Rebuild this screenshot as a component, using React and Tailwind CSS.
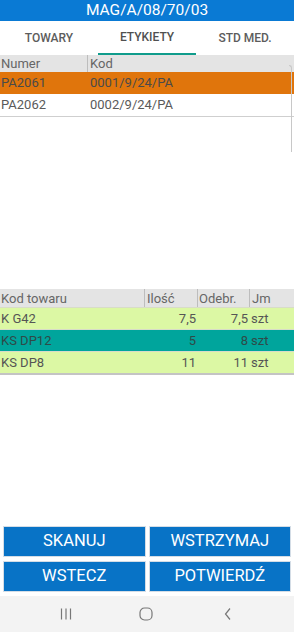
import React from "react";

const rows2 = [
  { kod: "K G42", ilosc: "7,5", odebr: "7,5", jm: "szt", bg: "bg-[#dcf8a4]", tc: "text-[#555]" },
  { kod: "KS DP12", ilosc: "5", odebr: "8", jm: "szt", bg: "bg-[#00a59c]", tc: "text-[#2f4a48]" },
  { kod: "KS DP8", ilosc: "11", odebr: "11", jm: "szt", bg: "bg-[#dcf8a4]", tc: "text-[#555]" },
];

export default function App() {
  return (
    <div
      className="w-[294px] h-[632px] flex flex-col bg-white overflow-hidden"
      style={{ fontFamily: "Roboto, 'Noto Sans', sans-serif" }}
    >
      {/* Title */}
      <div className="h-[21px] bg-[#0a7ad4] text-white flex items-center justify-center text-[15.5px] leading-none">
        MAG/A/08/70/03
      </div>

      {/* Tabs */}
      <div className="h-[34px] flex">
        <div className="w-[98px] flex items-center justify-center text-[12px] font-medium text-[#5c5c5c]">TOWARY</div>
        <div className="w-[98px] flex flex-col">
          <div className="flex-1 flex items-center justify-center text-[12px] font-medium text-[#505050]">ETYKIETY</div>
          <div className="h-[2px] bg-[#109c8c]" />
        </div>
        <div className="w-[98px] flex items-center justify-center text-[12px] font-medium text-[#5c5c5c]">STD MED.</div>
      </div>

      {/* Top list */}
      <div className="h-[234px] relative">
        <div className="h-[17px] bg-[#e4e4e4] flex text-[13px] text-[#666] leading-none">
          <div className="w-[88px] border-r border-[#bdbdbd] flex items-center pl-[1px]">Numer</div>
          <div className="flex-1 flex items-center pl-[2px]">Kod</div>
        </div>
        <div className="h-[22px] bg-[#e0750c] flex items-center text-[13px] text-[#4a4a4a]">
          <div className="w-[88px] pl-[1px]">PA2061</div>
          <div className="flex-1 pl-[2px]">0001/9/24/PA</div>
        </div>
        <div className="h-[23px] bg-white flex items-center text-[13px] text-[#5a5a5a] border-b border-[#cfcfcf]">
          <div className="w-[88px] pl-[1px]">PA2062</div>
          <div className="flex-1 pl-[2px]">0002/9/24/PA</div>
        </div>
        <div className="absolute right-[2px] top-[10px] h-[87px] w-[3px] border-r border-t border-[#c8c8c8] rounded-tr-[3px]" />
      </div>

      {/* Bottom table */}
      <div className="flex flex-col text-[13px] leading-none">
        <div className="h-[18px] bg-[#e4e4e4] flex text-[#666]">
          <div className="w-[145px] border-r border-[#bdbdbd] flex items-center pl-[1px]">Kod towaru</div>
          <div className="w-[53px] border-r border-[#bdbdbd] flex items-center pl-[2px]">Ilość</div>
          <div className="w-[52px] border-r border-[#bdbdbd] flex items-center pl-[1px]">Odebr.</div>
          <div className="flex-1 flex items-center pl-[2px]">Jm</div>
        </div>
        {rows2.map((r, i) => (
          <div key={i} className={`h-[22px] flex items-center border-t border-[#d8dcc8] ${r.bg} ${r.tc}`}>
            <div className="w-[145px] pl-[1px]">{r.kod}</div>
            <div className="w-[53px] text-right pr-[2px]">{r.ilosc}</div>
            <div className="w-[52px] text-right pr-[2px]">{r.odebr}</div>
            <div className="flex-1 pl-[1px]">{r.jm}</div>
          </div>
        ))}
        <div className="h-[2px] bg-[#c4c4c4]" />
      </div>

      <div className="flex-1" />

      {/* Buttons */}
      <div className="grid grid-cols-2 gap-x-[3px] gap-y-[4px] px-[3px] pb-[4px]">
        {["SKANUJ", "WSTRZYMAJ", "WSTECZ", "POTWIERDŹ"].map((t) => (
          <div
            key={t}
            className="h-[31px] bg-[#0873c6] border border-[#d4dde6] text-white text-[16.5px] flex items-center justify-center"
          >
            {t}
          </div>
        ))}
      </div>

      {/* Nav bar */}
      <div className="h-[36px] bg-[#f3f3f3] flex items-center pl-[59px]">
        <svg width="14" height="12" viewBox="0 0 14 12" fill="none" stroke="#777" strokeWidth="1.2">
          <path d="M2.5 0.5 V11.5 M7 0.5 V11.5 M11.5 0.5 V11.5" />
        </svg>
        <svg className="ml-[66px]" width="14" height="14" viewBox="0 0 14 14" fill="none" stroke="#777" strokeWidth="1.2">
          <rect x="1" y="1" width="12" height="12" rx="4.5" />
        </svg>
        <svg className="ml-[70px]" width="10" height="14" viewBox="0 0 10 14" fill="none" stroke="#777" strokeWidth="1.2">
          <path d="M7 1.5 L2.5 7 L7 12.5" />
        </svg>
      </div>
    </div>
  );
}
